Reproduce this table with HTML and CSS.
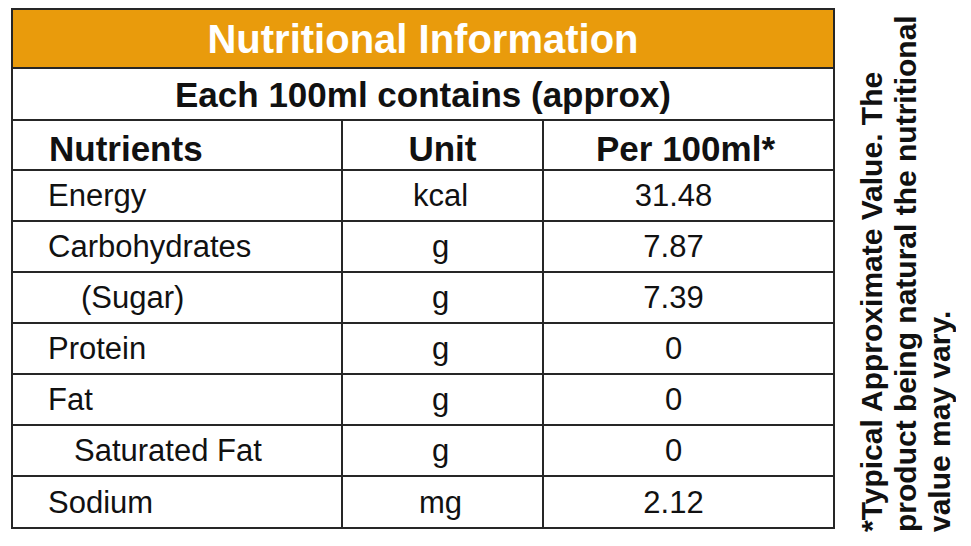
FILE: index.html
```html
<!DOCTYPE html>
<html lang="en">
<head>
<meta charset="utf-8">
<title>Nutritional Information</title>
<link rel="stylesheet" href="styles.css">
</head>
<body>
<div class="page">
  <table class="nutri">
    <colgroup>
      <col class="c1"><col class="c2"><col class="c3">
    </colgroup>
    <tr class="r-title"><th colspan="3" class="title">Nutritional Information</th></tr>
    <tr class="r-sub"><th colspan="3" class="sub">Each 100ml contains (approx)</th></tr>
    <tr class="r-head">
      <th class="name">Nutrients</th>
      <th>Unit</th>
      <th class="per">Per 100ml*</th>
    </tr>
    <tr class="r-body"><td class="name">Energy</td><td class="unit">kcal</td><td class="val">31.48</td></tr>
    <tr class="r-body"><td class="name">Carbohydrates</td><td class="unit">g</td><td class="val">7.87</td></tr>
    <tr class="r-body"><td class="name sugar">(Sugar)</td><td class="unit">g</td><td class="val">7.39</td></tr>
    <tr class="r-body"><td class="name">Protein</td><td class="unit">g</td><td class="val">0</td></tr>
    <tr class="r-body"><td class="name">Fat</td><td class="unit">g</td><td class="val">0</td></tr>
    <tr class="r-body"><td class="name sat">Saturated Fat</td><td class="unit">g</td><td class="val">0</td></tr>
    <tr class="r-body r-last"><td class="name">Sodium</td><td class="unit">mg</td><td class="val">2.12</td></tr>
  </table>
  <p class="note">*Typical Approximate Value. The<br>product being natural the nutritional<br>value may vary.</p>
</div>
</body>
</html>
```

FILE: styles.css
```css
html, body {
  margin: 0;
  padding: 0;
  background: #ffffff;
}

body {
  font-family: "Liberation Sans", Arial, sans-serif;
  color: #111111;
}

.page {
  display: flex;
  align-items: flex-start;
  padding: 8px 0 0 11px;
}

.nutri {
  border-collapse: separate;
  border-spacing: 0;
  border-top: 2px solid #262626;
  border-left: 2px solid #262626;
  table-layout: fixed;
  width: 822px;
}

.c1 { width: 330px; }
.c2 { width: 201px; }
.c3 { width: 291px; }

.nutri th,
.nutri td {
  box-sizing: border-box;
  border-right: 2px solid #262626;
  border-bottom: 2px solid #262626;
  padding: 0;
  vertical-align: middle;
  text-align: center;
  line-height: 1;
  white-space: nowrap;
}

.r-title { height: 59px; }
.r-sub { height: 52px; }
.r-head { height: 50px; }
.r-body { height: 51px; }
.r-last { height: 52px; }

.title {
  background: #e99b0c;
  color: #ffffff;
  font-size: 40px;
  font-weight: bold;
  padding-top: 3px;
}

.sub {
  font-size: 35px;
  font-weight: bold;
  color: #111111;
  padding-top: 2px;
}

.r-head th {
  font-size: 35px;
  font-weight: bold;
  padding-top: 6px;
}

.r-head th.name {
  text-align: left;
  padding-left: 36px;
}

.r-head th.per {
  padding-right: 6px;
}

.r-body td {
  font-size: 31px;
  font-weight: normal;
}

.r-body td.name {
  text-align: left;
  padding-left: 35px;
}

.r-body td.sugar {
  padding-left: 68px;
}

.r-body td.sat {
  padding-left: 61px;
}

.r-body td.unit {
  padding-right: 4px;
}

.r-body td.val {
  padding-right: 30px;
}

.note {
  margin: 0 0 0 20px;
  height: 524px;
  writing-mode: vertical-rl;
  transform: rotate(180deg);
  font-size: 30px;
  font-weight: bold;
  line-height: 34px;
  color: #111111;
  white-space: nowrap;
}
```
